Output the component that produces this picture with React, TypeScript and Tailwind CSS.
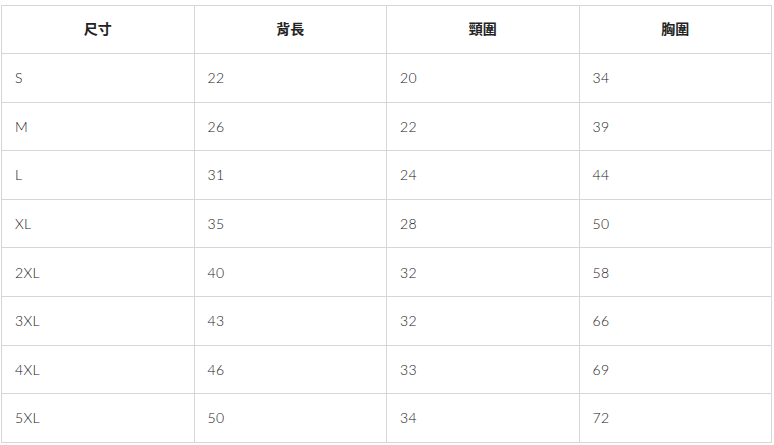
const headers = ["尺寸", "背長", "頸圍", "胸圍"];

const rows: string[][] = [
  ["S", "22", "20", "34"],
  ["M", "26", "22", "39"],
  ["L", "31", "24", "44"],
  ["XL", "35", "28", "50"],
  ["2XL", "40", "32", "58"],
  ["3XL", "43", "32", "66"],
  ["4XL", "46", "33", "69"],
  ["5XL", "50", "34", "72"],
];

export default function App() {
  return (
    <div className="w-[774px] h-[445px] bg-white pt-[5px] pl-[1px] overflow-hidden">
      <table className="w-[771px] border-collapse table-fixed text-[14px] text-[#222] font-['Lato','Noto_Sans_CJK_TC',sans-serif]">
        <thead>
          <tr className="h-[48px]">
            {headers.map((h) => (
              <th
                key={h}
                className="border border-[#d6d6d6] pb-[2px] text-center font-bold text-[#222] font-['Noto_Sans_CJK_TC',sans-serif]"
              >
                {h}
              </th>
            ))}
          </tr>
        </thead>
        <tbody>
          {rows.map((r) => (
            <tr key={r[0]} className="h-[48.6px]">
              {r.map((c, i) => (
                <td key={i} className="border border-[#d6d6d6] pl-[13px] text-left font-light tracking-[0.3px]">
                  {c}
                </td>
              ))}
            </tr>
          ))}
        </tbody>
      </table>
    </div>
  );
}
